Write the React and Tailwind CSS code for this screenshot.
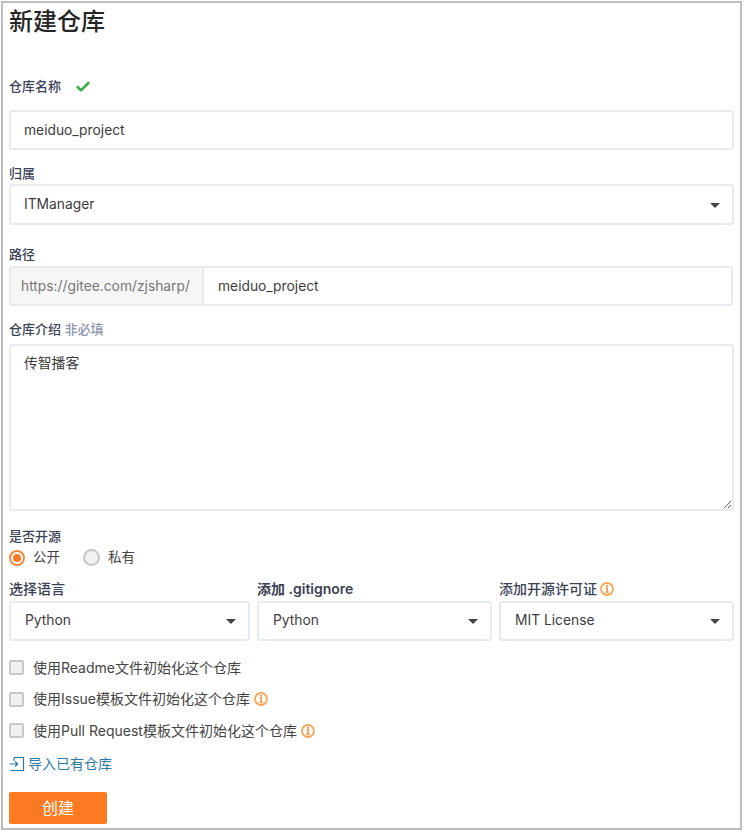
import { Check } from 'lucide-react'

function Caret() {
  return <span className="absolute right-[12px] top-1/2 mt-[-2px] h-0 w-0 border-x-[5px] border-t-[5px] border-x-transparent border-t-[#444]" />
}

function Info() {
  return (
    <svg viewBox="0 0 14 14" className="inline-block h-[14px] w-[14px] shrink-0" fill="none">
      <circle cx="7" cy="7" r="6" stroke="#f9a65a" strokeWidth="1.8" />
      <rect x="6.2" y="3" width="1.7" height="1.7" fill="#f08a2c" />
      <path d="M5.6 6h1.6v4M5.2 10.2h3.6" stroke="#f08a2c" strokeWidth="1.3" />
    </svg>
  )
}

function Select({ value, className }) {
  return (
    <div className={`relative flex items-center rounded-[3px] border-2 border-[#e6ebf2] bg-white text-[13.8px] text-[#3c3c3c] ${className}`}>
      {value}
      <Caret />
    </div>
  )
}

function Box({ label, info }) {
  return (
    <div className="flex h-[19px] items-center">
      <span className="h-[15px] w-[15px] rounded-[2px] border-2 border-[#c8c8c8] bg-[#f1f1f1]" />
      <span className="ml-[9px] text-sm text-[#444]">{label}</span>
      {info && <span className="ml-[4px] flex"><Info /></span>}
    </div>
  )
}

export default function App() {
  return (
    <div className="h-[832px] w-[744px] bg-white p-px font-['Inter','Noto_Sans_CJK_SC',sans-serif]">
      <div className="h-[829px] w-[741px] overflow-hidden border-2 border-[#bdbdbd] px-[6px]">
        <h1 className="mt-[4px] text-[24px] leading-[30px] font-medium text-[#262626]">新建仓库</h1>

        <div className="mt-[40px] flex h-[20px] items-center text-[13px] font-medium text-[#3a4256]">
          仓库名称
          <Check className="ml-[14px] h-[16px] w-[16px] text-[#3fae4a]" strokeWidth={4} />
        </div>
        <div className="mt-[13px] flex h-10 w-[725px] items-center rounded-[3px] border-2 border-[#e6ebf2] pl-[13px] text-[13.8px] text-[#3c3c3c]">
          meiduo_project
        </div>

        <div className="mt-[13px] h-[21px] text-[13px] leading-[21px] font-medium text-[#3a4256]">归属</div>
        <Select value="ITManager" className="h-[41px] w-[725px] pl-[13px]" />

        <div className="mt-[20px] h-[21px] text-[13px] leading-[18px] font-medium text-[#3a4256]">路径</div>
        <div className="flex h-10 w-[724px] overflow-hidden rounded-[3px] border-2 border-[#e6ebf2] text-[13.8px]">
          <div className="flex w-[193px] items-center border-r-2 border-[#e6ebf2] bg-[#f6f6f6] pl-[10px] text-[#777]">https://gitee.com/zjsharp/</div>
          <div className="flex items-center pl-[14px] text-[#3c3c3c]">meiduo_project</div>
        </div>

        <div className="mt-[13px] h-[25px] text-[13px] leading-[21px] font-medium text-[#3a4256]">
          仓库介绍 <span className="text-[#8d97ad]">非必填</span>
        </div>
        <textarea
          readOnly
          defaultValue="传智播客"
          className="block h-[167px] w-[725px] rounded-[3px] border-2 border-[#e6ebf2] px-[13px] py-[7px] text-[13.8px] text-[#3c3c3c] outline-none"
        />

        <div className="mt-[16px] h-[19px] text-[13px] leading-[19px] font-medium text-[#3a4256]">是否开源</div>
        <div className="mt-[2px] flex h-[19px] items-center text-[13.5px] text-[#444]">
          <span className="flex h-4 w-4 items-center justify-center rounded-full border-2 border-[#f58a3c] bg-white">
            <span className="h-2 w-2 rounded-full bg-[#fa7a28]" />
          </span>
          <span className="ml-[8px]">公开</span>
          <span className="ml-[23px] h-[17px] w-[17px] rounded-full border-2 border-[#c8c8c8] bg-[#f1f1f1]" />
          <span className="ml-[8px]">私有</span>
        </div>

        <div className="mt-[11px] grid w-[725px] grid-cols-[241px_235px_235px] gap-x-[7px] text-sm font-medium text-[#3a4256]">
          <div className="mb-[2px] h-[21px] leading-[21px]">选择语言</div>
          <div className="mb-[2px] h-[21px] leading-[21px] font-semibold">添加 .gitignore</div>
          <div className="mb-[2px] flex h-[21px] items-center gap-[3px]">添加开源许可证 <Info /></div>
          <Select value="Python" className="h-10 pl-[14px] font-normal" />
          <Select value="Python" className="h-10 pl-[14px] font-normal" />
          <Select value="MIT License" className="h-10 pl-[14px] font-normal" />
        </div>

        <div className="mt-[17px] flex flex-col gap-[12.5px]">
          <Box label="使用Readme文件初始化这个仓库" />
          <Box label="使用Issue模板文件初始化这个仓库" info />
          <Box label="使用Pull Request模板文件初始化这个仓库" info />
        </div>

        <div className="mt-[14px] flex h-[19px] items-center text-sm text-[#2f7aa5]">
          <svg viewBox="0 0 16 16" className="h-[16px] w-[16px]" fill="none" stroke="#2f7aa5" strokeWidth="1.2">
            <path d="M5 1.5h9.5v13H1.5M5 1.5V5M.5 8h8M6 5.5 8.7 8 6 10.5" />
          </svg>
          <span className="ml-[3px]">导入已有仓库</span>
        </div>

        <button className="mt-[19px] h-[32px] w-[98px] rounded-[2px] bg-[#fc7a21] text-base text-white">创建</button>
      </div>
    </div>
  )
}
